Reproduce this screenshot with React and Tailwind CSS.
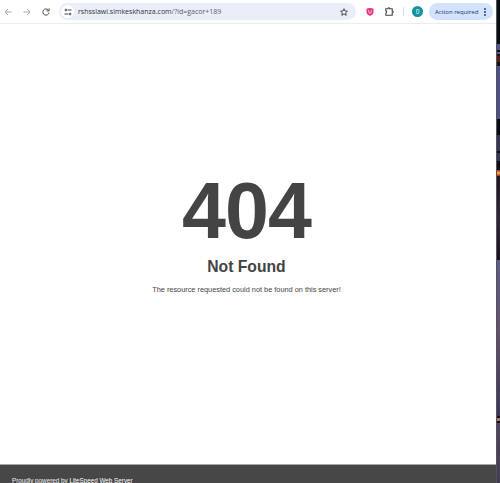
import React from 'react';

const BackIcon = ({ flip }) => (
  <svg className={flip ? 'h-2 w-2 rotate-180' : 'h-2 w-2'} viewBox="0 0 8 8" fill="none" stroke="#a2a4a6" strokeWidth="0.9">
    <path d="M7.5 4H1M4 0.9L0.9 4L4 7.1" />
  </svg>
);

const ReloadIcon = () => (
  <svg className="h-2 w-2" viewBox="0 0 8 8" fill="none" stroke="#45484b" strokeWidth="1">
    <path d="M7 4.6A3.1 3.1 0 1 1 6.3 2" />
    <path d="M7.1 0.4V2.9H4.6" />
  </svg>
);

const SiteIcon = () => (
  <svg className="h-2 w-2" viewBox="0 0 8 8" fill="none" stroke="#414447" strokeWidth="1">
    <path d="M3.7 2H7.5M0.5 6H4.3" />
    <circle cx="1.9" cy="2" r="0.9" />
    <circle cx="6.1" cy="6" r="0.9" />
  </svg>
);

const StarIcon = () => (
  <svg className="h-2 w-2" viewBox="0 0 8 8" fill="none" stroke="#3b3e42" strokeWidth="0.9">
    <path d="M4 0.7L5 3L7.5 3.2L5.6 4.8L6.2 7.3L4 6L1.8 7.3L2.4 4.8L0.5 3.2L3 3Z" />
  </svg>
);

const ShieldIcon = () => (
  <svg className="h-2 w-2" viewBox="0 0 8 8" fill="none">
    <path d="M0.5 0.8Q4 -0.6 7.5 0.8V4.6Q7.2 6.8 4 8Q0.8 6.8 0.5 4.6Z" fill="#e5347c" />
    <path d="M2.7 2V4Q2.8 5.3 4 5.3Q5.2 5.3 5.3 4V2" stroke="#fbd5e5" strokeWidth="0.8" />
  </svg>
);

const PuzzleIcon = () => (
  <svg className="h-[9px] w-[9px]" viewBox="0 0 9 9" fill="none" stroke="#45484b" strokeWidth="1.1">
    <path d="M0.8 1.7H3V1.2Q3.8 0.2 4.6 1.2V1.7H7.2V4.1H7.7Q8.6 4.9 7.7 5.7H7.2V8.2H0.8V6.2Q2.6 5 0.8 3.8Z" />
  </svg>
);

const Toolbar = () => (
  <div className="flex h-[24px] shrink-0 items-center border-b border-[#ececed] bg-white pl-1">
    <BackIcon />
    <div className="ml-[11px]"><BackIcon flip /></div>
    <div className="ml-[11px]"><ReloadIcon /></div>
    <div className="ml-[9px] flex h-[17px] w-[297px] shrink-0 items-center rounded-full bg-[#e9eef9] pr-2 pl-[2px]">
      <div className="flex h-[13px] w-[13px] items-center justify-center rounded-full bg-white">
        <SiteIcon />
      </div>
      <span className="ml-[4px] font-['Open_Sans',sans-serif] text-[7px] leading-none whitespace-nowrap text-[#5c6067]">
        <span className="text-[#303338]">rshsslawi.simkeskhanza.com</span>/?id=gacor+189
      </span>
      <div className="ml-auto"><StarIcon /></div>
    </div>
    <div className="ml-[10px]"><ShieldIcon /></div>
    <div className="ml-[11px]"><PuzzleIcon /></div>
    <div className="ml-[9px] h-[9px] w-px bg-[#cfe0fb]" />
    <div className="ml-[8px] flex h-[11px] w-[11px] items-center justify-center rounded-full bg-[#10939d] pt-px font-['Open_Sans',sans-serif] text-[6.5px] leading-none text-white">
      0
    </div>
    <div className="ml-[6px] flex h-[17px] w-[64px] items-center rounded-full bg-[#d3e3fd] pl-[6px] font-['Open_Sans',sans-serif] text-[6px] font-medium leading-none whitespace-nowrap text-[#18336b]">
      <span>Action required</span>
      <svg className="mr-[7px] ml-auto h-2 w-[2px]" viewBox="0 0 2 8" fill="#18336b">
        <circle cx="1" cy="1" r="0.9" />
        <circle cx="1" cy="4" r="0.9" />
        <circle cx="1" cy="7" r="0.9" />
      </svg>
    </div>
  </div>
);

// sliver of wallpaper to the right of the window
const Wallpaper = () => (
  <div className="flex w-[4px] shrink-0 flex-col border-l border-[#53545a] bg-[#141118]">
    <div className="h-[44px] bg-[#090e11]" />
    <div className="h-[6px] bg-[#555784]" />
    <div className="h-[2px] bg-[#15151f]" />
    <div className="h-[2px] bg-[#555784]" />
    <div className="h-[2px] bg-[#15151f]" />
    <div className="h-[6px] bg-[#5a1f1c]" />
    <div className="h-[4px] bg-[#15121b]" />
    <div className="h-[53px] bg-[#4f5287]" />
    <div className="h-[16px] bg-[#0b0b13]" />
    <div className="h-[16px] bg-[#353554]" />
    <div className="h-[2px] bg-[#0b0b13]" />
    <div className="h-[8px] bg-[#353554]" />
    <div className="h-[9px] bg-[#110e13]" />
    <div className="h-[6px] bg-linear-to-b from-[#a52b12] via-[#ffb24a] to-[#a52b12]" />
    <div className="h-[84px] bg-linear-to-b from-[#21151d] via-[#30273a] to-[#19121b]" />
    <div className="h-[156px] bg-linear-to-b from-[#5c5c89] via-[#65516b] via-45% to-[#3c375c]" />
    <div className="h-[2px] bg-[#17131c]" />
    <div className="h-[3px] bg-[#a97a70]" />
    <div className="h-[2px] bg-[#17131c]" />
    <div className="flex-1 bg-linear-to-b from-[#51465f] to-[#423b51]" />
  </div>
);

const NotFound = () => (
  <main className="flex flex-1 flex-col items-center pt-[147px] pr-[3px] text-center font-['Liberation_Sans',sans-serif] text-[#444]">
    <h1 className="text-[79px] leading-[79px] font-bold tracking-[-0.9px]">404</h1>
    <h2 className="mt-[7px] text-[15.7px] leading-[20px] font-bold">Not Found</h2>
    <p className="mt-[8px] text-[7.35px] leading-[10px]">The resource requested could not be found on this server!</p>
  </main>
);

const App = () => {
  return (
    <div className="flex h-[483px] w-[500px] overflow-hidden">
      <div className="flex w-[496px] shrink-0 flex-col bg-white">
        <Toolbar />
        <NotFound />
        <footer className="h-[19px] shrink-0 overflow-hidden border-t border-[#a3a9a6] bg-[#474747] pt-[11px] pl-[12px] font-['Liberation_Sans',sans-serif] text-[6.3px] leading-[9px] whitespace-nowrap text-[#f0f0f0]">
          Proudly powered by <a href="#" className="text-white">LiteSpeed Web Server</a>
        </footer>
      </div>
      <Wallpaper />
    </div>
  );
};

export default App;
